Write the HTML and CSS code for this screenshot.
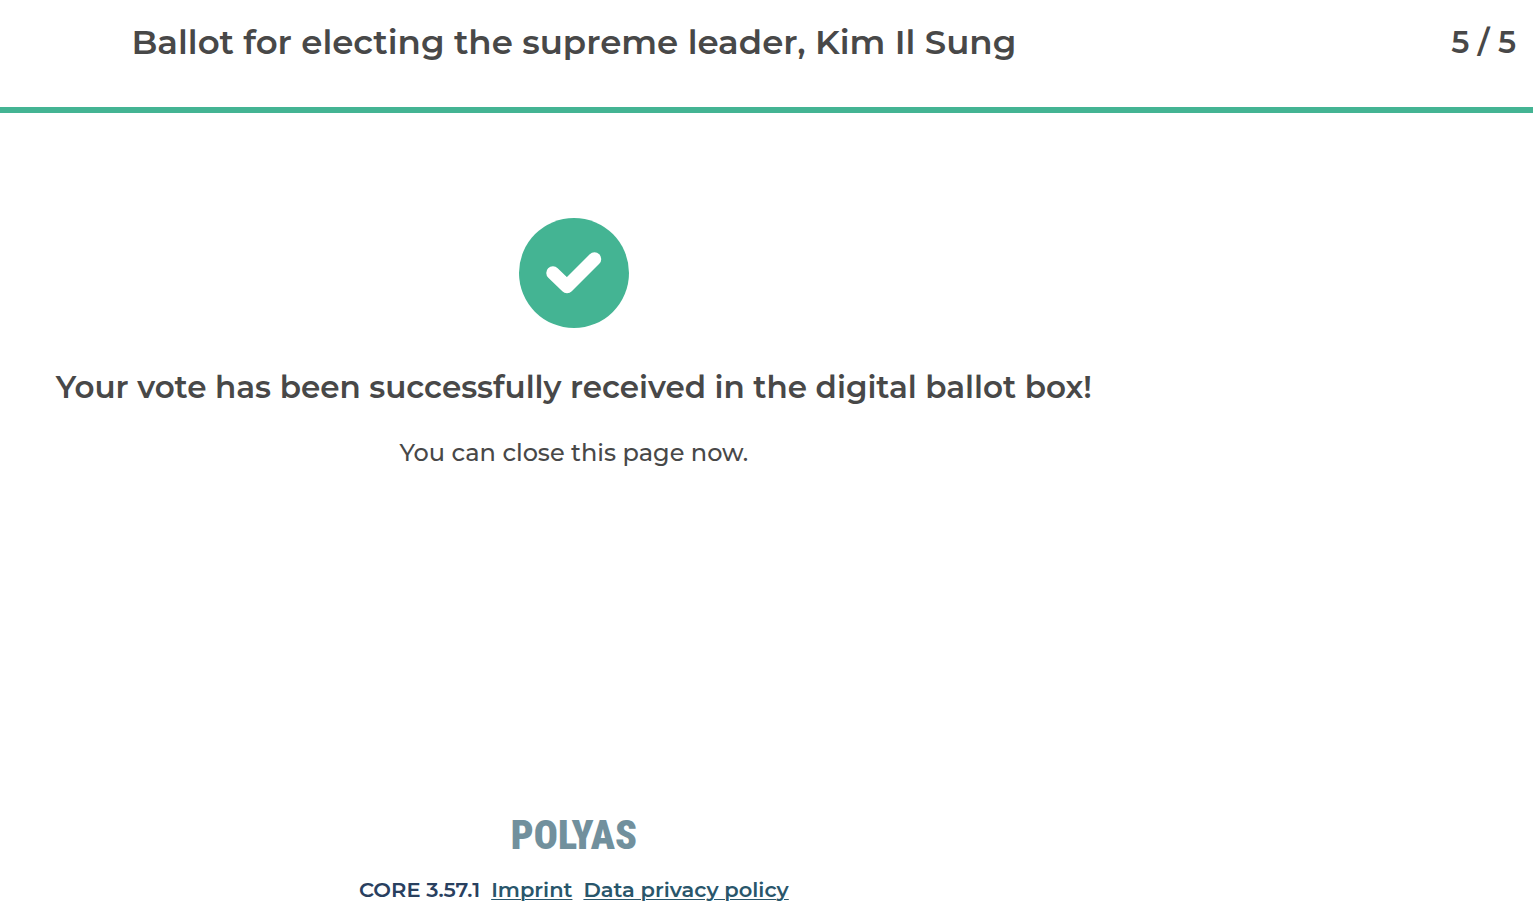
FILE: index.html
```html
<!DOCTYPE html>
<html lang="en">

<head>
    <meta charset="UTF-8">
    <meta name="viewport" content="width=device-width, initial-scale=1.0">
    <title>Ballot</title>
    <link rel="stylesheet" href="styles.css">
</head>

<body>
    <header class="header">
        <h1 class="title">Ballot for electing the supreme leader, Kim Il Sung</h1>
        <div class="steps">5 / 5</div>
    </header>

    <main class="content">
        <svg class="check" viewBox="0 0 110 110" aria-hidden="true">
            <circle cx="55" cy="55" r="55" fill="#44b493" />
            <path d="M34 55 L48 68.500 L75.500 41" fill="none" stroke="#fff" stroke-width="13.500"
                stroke-linecap="round" stroke-linejoin="round" />
        </svg>
        <h2 class="message">Your vote has been successfully received in the digital ballot box!</h2>
        <p class="hint">You can close this page now.</p>
    </main>

    <footer class="footer">
        <div class="logo">POLYAS</div>
        <div class="links">
            <span>CORE 3.57.1</span>
            <a href="#imprint">Imprint</a>
            <a href="#privacy">Data privacy policy</a>
        </div>
    </footer>
</body>

</html>
```

FILE: styles.css
```css
* {
    box-sizing: border-box;
}

body {
    --column: calc(75vw - 2px);
    margin: 0;
    min-height: 100vh;
    display: flex;
    flex-direction: column;
    font-family: Montserrat, Inter, sans-serif;
    font-weight: 600;
    color: #484848;
    background-color: #fff;
}

.header {
    display: flex;
    justify-content: space-between;
    align-items: flex-start;
    padding: 20px 17px 43px 0;
    border-bottom: 6px solid #44b493;
}

.title {
    width: var(--column);
    margin: 0;
    font-size: 34px;
    font-weight: 600;
    line-height: 44px;
    text-align: center;
}

.steps {
    font-size: 31px;
    line-height: 44px;
}

.content {
    flex: 1;
    width: var(--column);
    padding-top: 105px;
    text-align: center;
}

.check {
    display: block;
    width: 110px;
    height: 110px;
    margin: 0 auto 39px;
}

.message {
    margin: 0 0 28px;
    font-size: 31px;
    font-weight: 600;
    line-height: 40px;
}

.hint {
    margin: 0;
    font-size: 24px;
    font-weight: 500;
    line-height: 36px;
}

.footer {
    width: var(--column);
    padding-bottom: 18px;
    text-align: center;
}

.logo {
    margin-bottom: 22px;
    font-family: "Roboto Condensed", "Liberation Sans Narrow", sans-serif;
    font-size: 40px;
    font-weight: 900;
    line-height: 40px;
    color: #71909d;
}

.links {
    display: flex;
    justify-content: center;
    gap: 11px;
    font-size: 21px;
    line-height: 24px;
    color: #29405f;
}

.links a {
    color: #29566b;
    text-underline-offset: 2px;
    text-decoration-thickness: 1px;
}
```
